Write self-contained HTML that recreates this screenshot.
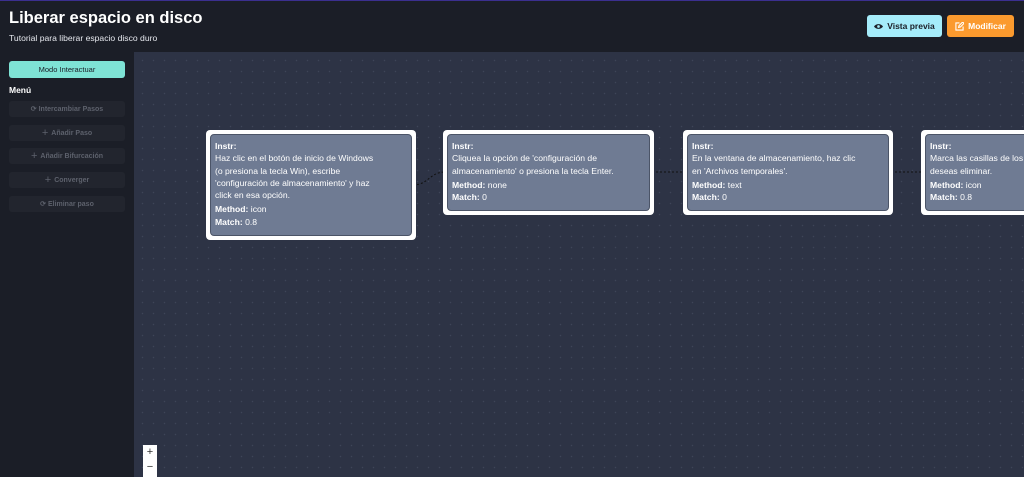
<!DOCTYPE html>
<html><head><style>
*{box-sizing:border-box;margin:0;padding:0}
body{width:1024px;height:477px;overflow:hidden;background:#1b1e27;font-family:"Liberation Sans",sans-serif;position:relative;color:#fff}
.topline{position:absolute;left:0;top:0;width:1024px;height:1px;background:#3b2f8f}
h1{position:absolute;left:9px;top:9px;font-size:16.5px;font-weight:bold;color:#fff}
.sub{position:absolute;left:9px;top:33px;font-size:8.6px;color:#e6e8ee}
.btn{position:absolute;top:15px;height:22px;border-radius:3px;font-size:8.5px;font-weight:bold;display:flex;align-items:center;justify-content:center;gap:4px}
.canvas{position:absolute;left:134px;top:52px;width:890px;height:425px;background-color:#2d3345;background-image:radial-gradient(circle,#3e4558 0.6px,transparent 0.9px);background-size:11px 11px;background-position:3px 3px}
.side{position:absolute;left:0;top:52px;width:134px;height:425px;background:#1b1e27}
.mi{position:absolute;left:9px;top:61px;width:116px;height:17px;background:#7ee3d5;border-radius:3px;color:#1b1e27;font-size:7.5px;display:flex;align-items:center;justify-content:center}
.menu{position:absolute;left:9px;top:85px;font-size:8.5px;font-weight:bold}
.item{position:absolute;left:9px;width:116px;height:16px;background:#22252e;border-radius:3px;color:#5d616c;font-size:7px;font-weight:bold;display:flex;align-items:center;justify-content:center;gap:3px}
.node{position:absolute;background:#fff;border-radius:4px;padding:4px}
.in{background:#6f7b93;border:1px solid #4b5467;border-radius:4px;height:100%;padding:5px 4px;font-size:8.6px;line-height:12.3px;color:#fff;overflow:hidden;white-space:nowrap}
.in b{font-weight:bold}
.zm{position:absolute;left:143px;top:445px;width:14px;height:32px;background:#fff;color:#333;font-size:11px;text-align:center;line-height:15px}
</style></head><body>
<div class="topline"></div>
<h1>Liberar espacio en disco</h1>
<div class="sub">Tutorial para liberar espacio disco duro</div>
<div class="btn" style="left:867px;width:75px;background:#a5ecfa;color:#1b1e27"><svg width="9" height="7" viewBox="0 0 10 7"><path d="M0 3.5C2 0 8 0 10 3.5C8 7 2 7 0 3.5Z" fill="#1b1e27"/><circle cx="5" cy="3.5" r="1.5" fill="#a5ecfa"/></svg>Vista previa</div>
<div class="btn" style="left:947px;width:67px;background:#fb9a2e;color:#fff"><svg width="9" height="9" viewBox="0 0 10 10" fill="none" stroke="#fff" stroke-width="1.2"><path d="M5 1H1v8h8V5"/><path d="M4 6l.5-2L8.5 0 10 1.5 6 5.5z"/></svg>Modificar</div>
<div class="side"></div>
<div class="canvas"></div>
<div class="mi">Modo Interactuar</div>
<div class="menu">Menú</div>
<div class="item" style="top:101px">⟳ Intercambiar Pasos</div>
<div class="item" style="top:125px"><span style="font-size:11px;font-weight:normal">+</span> Añadir Paso</div>
<div class="item" style="top:148px"><span style="font-size:11px;font-weight:normal">+</span> Añadir Bifurcación</div>
<div class="item" style="top:172px"><span style="font-size:11px;font-weight:normal">+</span> Converger</div>
<div class="item" style="top:196px">⟳ Eliminar paso</div>
<svg style="position:absolute;left:0;top:0" width="1024" height="477"><g stroke="#111" stroke-width="1" stroke-dasharray="2,2" fill="none"><path d="M413 185 C428 185 430 172 445 172"/><path d="M652 172H685"/><path d="M891 172H923"/></g></svg>
<div class="node" style="left:206px;top:130px;width:210px;height:110px"><div class="in"><b>Instr:</b><br>Haz clic en el botón de inicio de Windows<br>(o presiona la tecla Win), escribe<br>'configuración de almacenamiento' y haz<br>click en esa opción.<br><div style="margin-top:2px"><b>Method:</b> icon<br><b>Match:</b> 0.8</div></div></div>
<div class="node" style="left:443px;top:130px;width:211px;height:85px"><div class="in"><b>Instr:</b><br>Cliquea la opción de 'configuración de<br>almacenamiento' o presiona la tecla Enter.<div style="margin-top:2px"><b>Method:</b> none<br><b>Match:</b> 0</div></div></div>
<div class="node" style="left:683px;top:130px;width:210px;height:85px"><div class="in"><b>Instr:</b><br>En la ventana de almacenamiento, haz clic<br>en 'Archivos temporales'.<div style="margin-top:2px"><b>Method:</b> text<br><b>Match:</b> 0</div></div></div>
<div class="node" style="left:921px;top:130px;width:120px;height:85px"><div class="in"><b>Instr:</b><br>Marca las casillas de los<br>deseas eliminar.<div style="margin-top:2px"><b>Method:</b> icon<br><b>Match:</b> 0.8</div></div></div>
<div class="zm">+<br>−</div>
</body></html>
